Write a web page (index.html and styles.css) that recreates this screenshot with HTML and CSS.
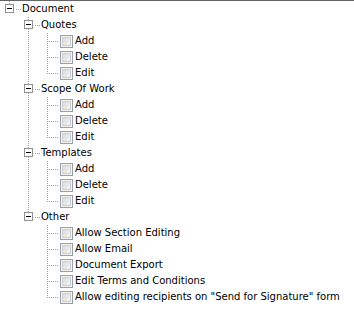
FILE: index.html
```html
<!DOCTYPE html>
<html lang="en">
<head>
  <meta charset="UTF-8">
  <meta name="viewport" content="width=device-width, initial-scale=1.0">
  <title>Document Permissions</title>
  <link rel="stylesheet" href="styles.css">
</head>
<body>
  <div class="tree">
    <ul class="level root">
      <li class="node">
        <div class="row"><span class="toggle"></span><span class="hline short"></span><span class="label">Document</span></div>
        <ul class="level">
          <li class="node">
            <div class="row"><span class="toggle"></span><span class="hline short"></span><span class="label">Quotes</span></div>
            <ul class="level">
              <li><div class="row"><span class="hline"></span><input type="checkbox" class="check"><span class="label">Add</span></div></li>
              <li><div class="row"><span class="hline"></span><input type="checkbox" class="check"><span class="label">Delete</span></div></li>
              <li><div class="row"><span class="hline"></span><input type="checkbox" class="check"><span class="label">Edit</span></div></li>
            </ul>
          </li>
          <li class="node">
            <div class="row"><span class="toggle"></span><span class="hline short"></span><span class="label">Scope Of Work</span></div>
            <ul class="level">
              <li><div class="row"><span class="hline"></span><input type="checkbox" class="check"><span class="label">Add</span></div></li>
              <li><div class="row"><span class="hline"></span><input type="checkbox" class="check"><span class="label">Delete</span></div></li>
              <li><div class="row"><span class="hline"></span><input type="checkbox" class="check"><span class="label">Edit</span></div></li>
            </ul>
          </li>
          <li class="node">
            <div class="row"><span class="toggle"></span><span class="hline short"></span><span class="label">Templates</span></div>
            <ul class="level">
              <li><div class="row"><span class="hline"></span><input type="checkbox" class="check"><span class="label">Add</span></div></li>
              <li><div class="row"><span class="hline"></span><input type="checkbox" class="check"><span class="label">Delete</span></div></li>
              <li><div class="row"><span class="hline"></span><input type="checkbox" class="check"><span class="label">Edit</span></div></li>
            </ul>
          </li>
          <li class="node">
            <div class="row"><span class="toggle"></span><span class="hline short"></span><span class="label">Other</span></div>
            <ul class="level">
              <li><div class="row"><span class="hline"></span><input type="checkbox" class="check"><span class="label">Allow Section Editing</span></div></li>
              <li><div class="row"><span class="hline"></span><input type="checkbox" class="check"><span class="label">Allow Email</span></div></li>
              <li><div class="row"><span class="hline"></span><input type="checkbox" class="check"><span class="label">Document Export</span></div></li>
              <li><div class="row"><span class="hline"></span><input type="checkbox" class="check"><span class="label">Edit Terms and Conditions</span></div></li>
              <li><div class="row"><span class="hline"></span><input type="checkbox" class="check"><span class="label">Allow editing recipients on "Send for Signature" form</span></div></li>
            </ul>
          </li>
        </ul>
      </li>
    </ul>
  </div>
</body>
</html>
```

FILE: styles.css
```css
body {
  margin: 0;
  padding: 0;
  background: #fff;
  font-family: "DejaVu Sans", Verdana, sans-serif;
  font-size: 10px;
  color: #000;
}

.tree {
  border-top: 1px solid #646464;
  height: 314px;
  overflow: hidden;
}

.level {
  list-style: none;
  margin: 0;
  padding: 0 0 0 19px;
}

.level.root {
  padding-left: 0;
}

.level li {
  position: relative;
}

/* vertical sibling line */
.level li::before {
  content: "";
  position: absolute;
  left: 9px;
  top: 0;
  bottom: 0;
  width: 1px;
  background: repeating-linear-gradient(to bottom, #a0a0a0 0 1px, transparent 1px 2px);
}

.level li:last-child::before {
  bottom: auto;
  height: 8px;
}

.row {
  position: relative;
  display: flex;
  align-items: center;
  height: 16px;
  white-space: nowrap;
}

.node > .row {
  padding-left: 5px;
}

li:not(.node) > .row {
  padding-left: 9px;
}

.toggle {
  position: relative;
  z-index: 1;
  box-sizing: border-box;
  width: 9px;
  height: 9px;
  margin-top: -1px;
  border: 1px solid #919191;
  background: #fff;
}

.toggle::after {
  content: "";
  position: absolute;
  left: 1px;
  top: 3px;
  width: 5px;
  height: 1px;
  background: #000;
}

.hline {
  width: 11px;
  height: 1px;
  background: repeating-linear-gradient(to right, #a0a0a0 0 1px, transparent 1px 2px);
}

.hline.short {
  width: 6px;
  margin-left: 1px;
  background: repeating-linear-gradient(to right, transparent 0 1px, #a0a0a0 1px 2px);
}

.check {
  appearance: none;
  -webkit-appearance: none;
  box-sizing: border-box;
  width: 13px;
  height: 13px;
  margin: 0 0 0 2px;
  border: 1px solid #9aa0a7;
  background: #f4f4f4;
  position: relative;
}

.check::after {
  content: "";
  position: absolute;
  left: 1px;
  top: 1px;
  width: 9px;
  height: 9px;
  box-sizing: border-box;
  border: 1px solid #cdd0d4;
  background: linear-gradient(135deg, #dadada, #f3f3f3);
}

.label {
  padding-left: 2px;
  line-height: 16px;
}

.node > .row .label {
  padding-left: 1px;
}
```
